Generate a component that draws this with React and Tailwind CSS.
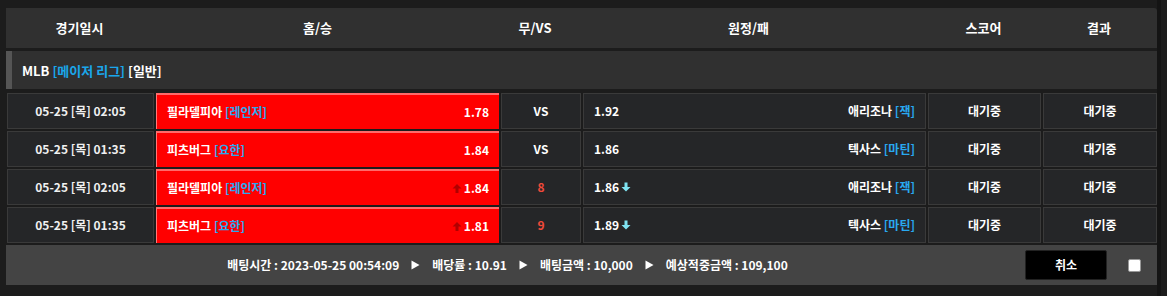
import React from "react";

const rows = [
  { date: "05-25 [목] 02:05", home: "필라델피아", hp: "레인저", ho: "1.78", mid: "VS", ao: "1.92", away: "애리조나", ap: "잭", arrows: false },
  { date: "05-25 [목] 01:35", home: "피츠버그", hp: "요한", ho: "1.84", mid: "VS", ao: "1.86", away: "텍사스", ap: "마틴", arrows: false },
  { date: "05-25 [목] 02:05", home: "필라델피아", hp: "레인저", ho: "1.84", mid: "8", ao: "1.86", away: "애리조나", ap: "잭", arrows: true },
  { date: "05-25 [목] 01:35", home: "피츠버그", hp: "요한", ho: "1.81", mid: "9", ao: "1.89", away: "텍사스", ap: "마틴", arrows: true },
];

const cols = "grid grid-cols-[147px_343px_80px_343px_113px_114px] gap-x-[2px]";

function UpArrow() {
  return (
    <svg width="10" height="10" viewBox="0 0 10 10" className="mr-[2px]">
      <path d="M5 1 L9.5 5.5 L6.5 5.5 L6.5 10 L3.5 10 L3.5 5.5 L0.5 5.5 Z" fill="#b00000" />
    </svg>
  );
}

function DownArrow() {
  return (
    <svg width="10" height="10" viewBox="0 0 10 10" className="ml-[2px]">
      <path d="M5 9.5 L9.5 5 L6.5 5 L6.5 0.5 L3.5 0.5 L3.5 5 L0.5 5 Z" fill="#7fe3f2" />
    </svg>
  );
}

function Play() {
  return (
    <svg width="9" height="10" viewBox="0 0 9 10" className="mx-[12px]">
      <path d="M0.5 0.5 L8.5 5 L0.5 9.5 Z" fill="#ffffff" />
    </svg>
  );
}

const cell = "h-[36px] bg-[#252628] border border-[#3a3a3a] flex items-center";

export default function App() {
  return (
    <div
      className="w-[1167px] h-[296px] bg-[#1c1c1c] flex text-white text-[12px] font-bold"
      style={{ fontFamily: '"Noto Sans CJK KR", "Noto Sans", sans-serif' }}
    >
      <div className="pl-[6px] pt-[8px] w-[1157px]">
        <div className={`${cols} h-[40px] bg-[#303030] rounded-tr-[3px] items-center text-[13px]`}>
          <div className="text-center">경기일시</div>
          <div className="text-center pr-[18px]">홈/승</div>
          <div className="text-center pr-[10px]">무/VS</div>
          <div className="text-center pr-[10px]">원정/패</div>
          <div className="text-center">스코어</div>
          <div className="text-center">결과</div>
        </div>
        <div className="mt-[3px] h-[38px] bg-[#303030] flex items-center">
          <div className="w-[6px] h-full bg-[#555555]" />
          <div className="pl-[10px] text-[13px] leading-none">
            MLB <span className="text-[#1aa7ec]">[메이저 리그]</span> [일반]
          </div>
        </div>
        <div className="mt-[4px] flex flex-col gap-y-[2px] pl-[1px]">
          {rows.map((r, i) => (
            <div key={i} className={`${cols} leading-none`}>
              <div className={`${cell} justify-center text-[#f0f0f0]`}>{r.date}</div>
              <div className="h-[36px] bg-[#ff0000] border-t-[2px] border-l-[1px] border-t-[#ff6a6a] border-l-[#ff7a7a] flex items-center justify-between pl-[10px] pr-[10px]">
                <span>
                  {r.home} <span className="text-[#29a9f0]">[{r.hp}]</span>
                </span>
                <span className="flex items-center">
                  {r.arrows && <UpArrow />}
                  {r.ho}
                </span>
              </div>
              <div className={`${cell} justify-center ${r.arrows ? "text-[#f04a3a]" : "text-white"}`}>{r.mid}</div>
              <div className={`${cell} justify-between pl-[10px] pr-[10px]`}>
                <span className="flex items-center">
                  {r.ao}
                  {r.arrows && <DownArrow />}
                </span>
                <span>
                  {r.away} <span className="text-[#29a9f0]">[{r.ap}]</span>
                </span>
              </div>
              <div className={`${cell} justify-center`}>대기중</div>
              <div className={`${cell} justify-center`}>대기중</div>
            </div>
          ))}
        </div>
        <div className="mt-[2px] h-[40px] bg-[#444444] flex items-center">
          <div className="flex-1 flex items-center justify-center text-[12px] leading-none">
            <span>배팅시간 : 2023-05-25 00:54:09</span>
            <Play />
            <span>배당률 : 10.91</span>
            <Play />
            <span>배팅금액 : 10,000</span>
            <Play />
            <span>예상적중금액 : 109,100</span>
          </div>
          <div className="w-[82px] h-[30px] bg-black rounded-[2px] border border-[#222] flex items-center justify-center ml-[16px]">
            취소
          </div>
          <div className="w-[13px] h-[13px] bg-white rounded-[2px] border border-[#999] ml-[21px] mr-[16px]" />
        </div>
      </div>
      <div className="w-[4px] h-full bg-[#141414]" />
      <div className="flex-1 h-full bg-[#1c1c1c]" />
    </div>
  );
}
